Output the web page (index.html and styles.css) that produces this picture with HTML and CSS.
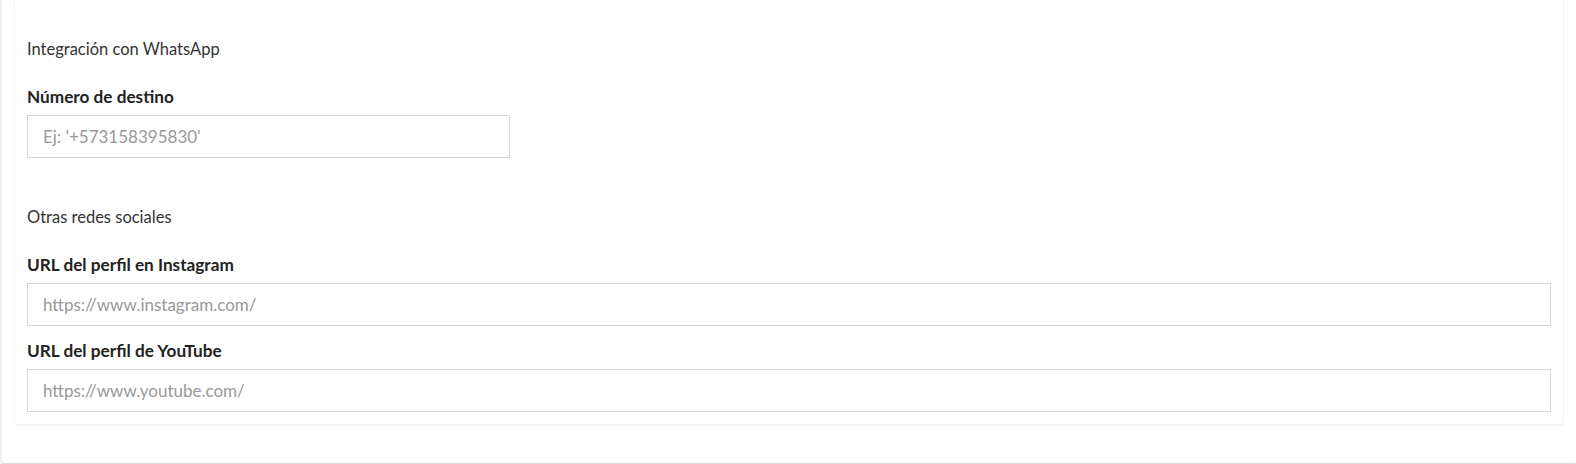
FILE: index.html
```html
<!DOCTYPE html>
<html lang="es">
<head>
<meta charset="utf-8">
<title>Redes sociales</title>
<link rel="stylesheet" href="styles.css">
</head>
<body>
<div class="outer">
  <div class="card">
    <h4 class="section-title">Integración con WhatsApp</h4>
    <div class="field">
      <label class="field-label" for="wa">Número de destino</label>
      <input class="input input-short" id="wa" type="text" placeholder="Ej: '+573158395830'">
    </div>
    <h4 class="section-title section-gap">Otras redes sociales</h4>
    <div class="field">
      <label class="field-label" for="ig">URL del perfil en Instagram</label>
      <input class="input" id="ig" type="text" placeholder="https://www.instagram.com/">
    </div>
    <div class="field field-next">
      <label class="field-label" for="yt">URL del perfil de YouTube</label>
      <input class="input" id="yt" type="text" placeholder="https://www.youtube.com/">
    </div>
  </div>
</div>
</body>
</html>
```

FILE: styles.css
```css
html, body {
  margin: 0;
  padding: 0;
}
body {
  background: #ecf0f5;
  font-family: "Source Sans Pro", Lato, "Liberation Sans", sans-serif;
  color: #333;
  height: 464px;
  overflow: hidden;
}
.outer {
  margin-left: 2px;
  background: #fff;
  border-radius: 0 0 3px 3px;
  box-shadow: 0 1px 1px rgba(0, 0, 0, 0.1);
  padding: 0 12px 38px 12px;
}
.card {
  background: #fff;
  border: 1px solid #f2f3f5;
  border-top: none;
  border-radius: 0 0 4px 4px;
  box-shadow: 0 1px 1px rgba(0, 0, 0, 0.05);
  padding: 36px 12px 12px 12px;
}
.section-title {
  margin: 0 0 22px 0;
  padding-top: 1px;
  font-size: 16.5px;
  line-height: 24px;
  font-weight: 400;
  color: #333;
}
.section-gap {
  margin-top: 46px;
}
.field {
  display: flex;
  flex-direction: column;
}
.field-next {
  margin-top: 11px;
}
.field-label {
  font-size: 17.2px;
  line-height: 24px;
  font-weight: 700;
  color: #222;
  padding-top: 2px;
  margin-bottom: 6px;
}
.input {
  box-sizing: border-box;
  height: 43px;
  width: 100%;
  border: 1px solid #d2d6de;
  border-radius: 0;
  padding: 0 15px;
  font-family: inherit;
  font-size: 17px;
  color: #555;
  background: #fff;
  outline: none;
}
.input::placeholder {
  color: #999;
  opacity: 1;
}
.input-short {
  width: 483px;
}
```
